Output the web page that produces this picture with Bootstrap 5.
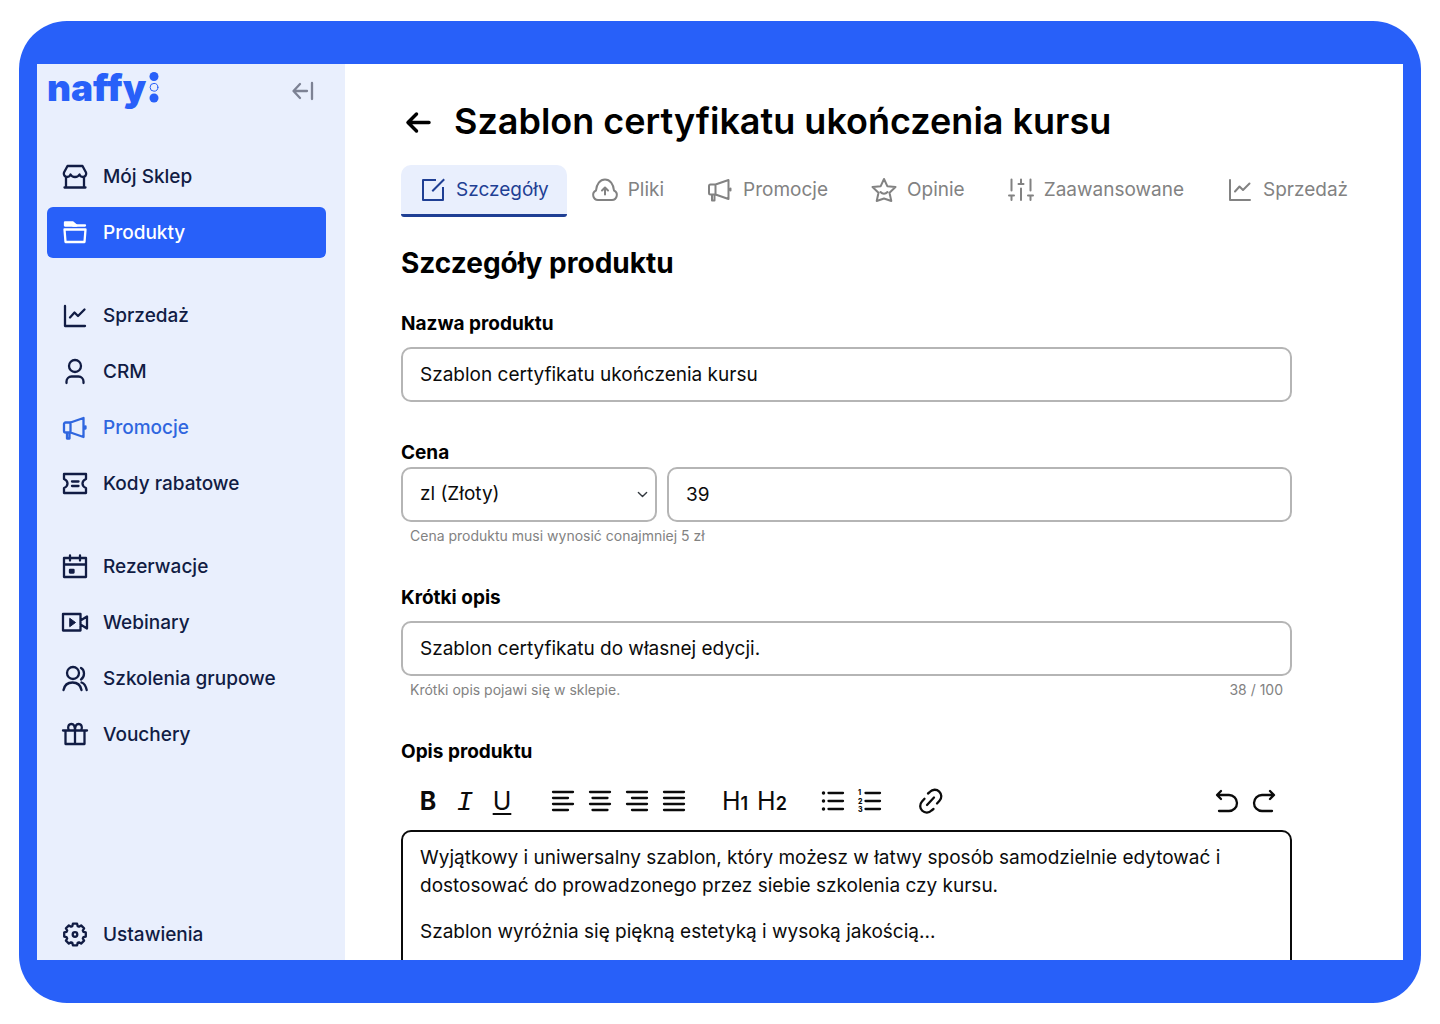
<!DOCTYPE html>
<html lang="pl">
<head>
<meta charset="utf-8">
<meta name="viewport" content="width=device-width, initial-scale=1">
<title>naffy – Szablon certyfikatu ukończenia kursu</title>
<link href="https://cdn.jsdelivr.net/npm/bootstrap@5.3.0/dist/css/bootstrap.min.css" rel="stylesheet">
<style>
:root{--brand:#2860f9;--ink:#111c44;--pale:#e9effd;--tab:#1f3f94;--muted:#828282}
body{font-family:Inter,"Open Sans",sans-serif;color:#0b0b0b;font-size:19px;line-height:28px;height:100vh;padding:21px 19px;background:#fff}
svg{display:block;flex:none;fill:none;stroke:currentColor;stroke-width:2.300;stroke-linecap:round;stroke-linejoin:round}
.frame{background:var(--brand);border-radius:48px;padding:43px 18px;height:100%}
.app{background:#fff;height:100%;overflow:hidden}
.sidebar{width:308px;flex:none;background:var(--pale);padding:0 19px 0 10px}
.brand-row{height:52px;margin-bottom:35px}
.logo{color:var(--brand);font-weight:900;font-size:37px;line-height:44px;height:48px;align-self:flex-start;text-decoration:none}
.collapse-btn{border:0;background:none;padding:0;color:#7d8294;margin-right:10px}
.side-nav{gap:5px}
.side-link{height:51px;padding:0 14px;gap:14px;color:var(--ink);font-weight:500;text-decoration:none;border-radius:6px;white-space:nowrap}
.side-link.active{background:var(--brand);color:#fff}
.side-link.hovered{color:#2f66df}
.group-start{margin-top:27px}
.content{padding:29px 30px 0 56px;min-width:0}
.title-row{height:56px;gap:20px}
.title-row a{color:#000;padding-left:1px}
h1{font-size:36px;font-weight:600;line-height:56px;margin:0;white-space:nowrap;color:#000}
.tabs{margin-top:16px;gap:6px}
.tab-link{height:52px;padding:0 18px;gap:9px;color:var(--muted);text-decoration:none;border-bottom:3px solid transparent;border-radius:10px 10px 3px 3px;white-space:nowrap}
.tab-link svg{stroke-width:2}
.tab-link.active{background:var(--pale);color:var(--tab);border-bottom-color:var(--tab)}
h2{font-size:28px;font-weight:700;line-height:42px;margin:25px 0 26px;color:#000}
.product-form{padding-right:81px}
.field-label{display:block;font-weight:700;color:#000;line-height:28px}
.field-label + .field-box{margin-top:9px}
.form-block + .form-block{margin-top:37px}
.field-box{height:55px;border:2px solid #b5b5b5;border-radius:10px;padding:0 17px;font-size:19px;color:#0b0b0b}
.price-row{gap:10px}
.currency{width:256px;flex:none;background-size:11px;background-position:right 7px center}
.hint{font-size:14px;line-height:22px;color:#828282;margin-top:3px;padding:0 9px}
.toolbar{margin-top:18px;padding:0 11px 0 10px;gap:27px}
.tool-group{gap:3px}
.tool{width:34px;height:34px;border:0;background:none;padding:0;display:flex;align-items:center;justify-content:center;color:#0b0b0b;font-size:25px;line-height:34px}
.tool small{font-size:18px;font-weight:600;line-height:24px}
.tool i{font-family:"Liberation Mono",monospace;font-size:28px;padding-top:3px}
.tool u{text-underline-offset:3px}
.tool b{font-weight:700}
.editor{margin-top:12px;height:300px;border:2px solid #0b0b0b;border-radius:10px;padding:12px 17px;outline:0}
.editor p{margin:0 0 18px}
</style>
<script src="https://cdn.jsdelivr.net/npm/bootstrap@5.3.0/dist/js/bootstrap.bundle.min.js"></script>
</head>
<body>
<svg width="0" height="0" class="position-absolute" aria-hidden="true">
  <symbol id="i-chart" viewBox="0 0 28 28"><path d="M4 4v20h20M9 15.500l4.500-5 3.500 3.500 6.500-6.500"/></symbol>
  <symbol id="i-mega" viewBox="0 0 28 28"><path d="M9.500 8.500H4.500a1.500 1.500 0 0 0-1.500 1.500v7A1.500 1.500 0 0 0 4.500 18.500H9.500zM9.500 8.500l13-4.500v19L9.500 18.500M6 19v5.500h2.500V19M24.500 12.500v2"/></symbol>
</svg>
<div class="frame">
<div class="app d-flex">
  <aside class="sidebar d-flex flex-column">
    <div class="brand-row d-flex align-items-center justify-content-between">
      <a href="#" class="logo d-flex align-items-center">naffy<svg width="16" height="34" viewBox="0 0 16 34"><g stroke="none" fill="currentColor"><circle cx="8" cy="5.500" r="4.500"/><circle cx="8" cy="27" r="4.500"/></g><circle cx="8" cy="16.300" r="3.900" stroke-width="1"/></svg></a>
      <button class="collapse-btn" aria-label="Zwiń menu"><svg width="28" height="28" viewBox="0 0 28 28"><path d="M12 8l-6.500 7 6.500 7M6 15h13M24 7v16"/></svg></button>
    </div>
    <nav class="side-nav d-flex flex-column">
      <a href="#" class="side-link d-flex align-items-center"><svg width="28" height="28" viewBox="0 0 28 28"><path d="M6.500 3h15l3.500 6.500c.8 2-.8 4.500-3 4.500-1.700 0-3-1-3.500-2.500-.8 1.500-2.500 2.500-4.500 2.500s-3.700-1-4.500-2.500c-.5 1.500-1.800 2.500-3.500 2.500-2.200 0-3.800-2.500-3-4.500zM5 14v10M23 14v10M3.500 24.500h21"/></svg>Mój Sklep</a>
      <a href="#" class="side-link active d-flex align-items-center" aria-current="page"><svg width="28" height="28" viewBox="0 0 28 28"><path d="M3.500 10.500h21l-1 12.500h-19zM12 6.500h12"/><path d="M4 3.500h8l3.500 3H4z" fill="currentColor"/></svg>Produkty</a>
      <a href="#" class="side-link group-start d-flex align-items-center"><svg width="28" height="28"><use href="#i-chart"/></svg>Sprzedaż</a>
      <a href="#" class="side-link d-flex align-items-center"><svg width="28" height="28" viewBox="0 0 28 28"><circle cx="14" cy="8" r="6"/><path d="M5.500 25v-1.500a5 5 0 0 1 5-5h7a5 5 0 0 1 5 5V25"/></svg>CRM</a>
      <a href="#" class="side-link hovered d-flex align-items-center"><svg width="28" height="28"><use href="#i-mega"/></svg>Promocje</a>
      <a href="#" class="side-link d-flex align-items-center"><svg width="28" height="28" viewBox="0 0 28 28"><path d="M3 4h22v5c-2.500 1-3.500 2.500-3.500 4.500s1 3.500 3.500 4.500v5H3v-5c2.500-1 3.500-2.500 3.500-4.500S5.500 10 3 9zM11 11.500h6.500M11 16h6.500"/></svg>Kody rabatowe</a>
      <a href="#" class="side-link group-start d-flex align-items-center"><svg width="28" height="28" viewBox="0 0 28 28"><path d="M3 5h22v19H3zM3 11.500h22M9 2.500v5M19 2.500v5"/><path d="M9 17h3.500v2.500H9z" fill="currentColor"/></svg>Rezerwacje</a>
      <a href="#" class="side-link d-flex align-items-center"><svg width="28" height="28" viewBox="0 0 28 28"><path d="M2 5h17.500v16.500H2zM19.500 11.500L26 7.500v12l-6.500-4"/><path d="M9 9.500l5.500 4L9 17.500z" fill="currentColor" stroke-width="1"/></svg>Webinary</a>
      <a href="#" class="side-link d-flex align-items-center"><svg width="28" height="28" viewBox="0 0 28 28"><circle cx="12" cy="8" r="6"/><path d="M2.500 25c1-5 4.500-7.500 9-7.500s8 2.500 9 7.500M20 3c4 2 4 9 0 11.500M20.500 17.500c3 1 4.500 4 5.200 7.500"/></svg>Szkolenia grupowe</a>
      <a href="#" class="side-link d-flex align-items-center"><svg width="28" height="28" viewBox="0 0 28 28"><path d="M2 9.500h24M4.500 9.500V23h19V9.500M14 9.500V23M14 9.500H8C6 6.500 7.500 3 10.500 3S14 5.500 14 9.500c0-4 .5-6.500 3.500-6.500S22 6.500 20 9.500z"/></svg>Vouchery</a>
    </nav>
    <a href="#" class="side-link mt-auto d-flex align-items-center"><svg width="28" height="28" viewBox="0 0 28 28"><circle cx="14" cy="13.500" r="2.300"/><path d="M11.900 2.700h4.200l.6 2.400 1.300.6 2.100-1.300 3 3-1.300 2.100.6 1.300 2.400.6v4.200l-2.400.6-.6 1.300 1.300 2.100-3 3-2.100-1.300-1.300.6-.6 2.400h-4.200l-.6-2.400-1.300-.6-2.100 1.300-3-3 1.300-2.100-.6-1.300-2.400-.6v-4.200l2.400-.6.6-1.300-1.300-2.100 3-3 2.100 1.300 1.300-.6z"/></svg>Ustawienia</a>
  </aside>
  <main class="content flex-fill">
    <div class="title-row d-flex align-items-center">
      <a href="#" aria-label="Wstecz"><svg width="32" height="32" viewBox="0 0 32 32"><path d="M14.500 9l-8.500 8.500 8.500 8.500M6.500 17.500h20.500" stroke-width="3.500"/></svg></a>
      <h1>Szablon certyfikatu ukończenia kursu</h1>
    </div>
    <nav class="tabs d-flex">
      <a href="#" class="tab-link active d-flex align-items-center" aria-current="true"><svg width="28" height="28" viewBox="0 0 28 28"><path d="M16 4H4v20h20V12M14 14.500L24.500 4" stroke-linecap="square"/></svg>Szczegóły</a>
      <a href="#" class="tab-link d-flex align-items-center"><svg width="28" height="28" viewBox="0 0 28 28"><path d="M7 24h14a5 5 0 0 0 2-9.500C22.500 8 19 3.500 14 3.500S5.500 8 5 14.500A5 5 0 0 0 7 24zM14 18.500v-6M11 14.500l3-3 3 3"/></svg>Pliki</a>
      <a href="#" class="tab-link d-flex align-items-center"><svg width="28" height="28"><use href="#i-mega"/></svg>Promocje</a>
      <a href="#" class="tab-link d-flex align-items-center"><svg width="28" height="28" viewBox="0 0 28 28"><path d="M14 3l3.300 7.200 8.200.8-6 5.700 1.800 8.300L14 22.500 6.700 25l1.800-8.300-6-5.700 8.200-.8zM10.500 16c2 2.300 5 2.300 7 0"/></svg>Opinie</a>
      <a href="#" class="tab-link d-flex align-items-center"><svg width="28" height="28" viewBox="0 0 28 28"><path d="M4.500 3.500v11M4.500 24v-4M2 19.500h5M14 3.500v4M11.500 8h5M14 12.500V24M23.500 3.500v11M23.500 24v-4M21 19.500h5"/></svg>Zaawansowane</a>
      <a href="#" class="tab-link d-flex align-items-center"><svg width="28" height="28"><use href="#i-chart"/></svg>Sprzedaż</a>
    </nav>
    <form class="product-form">
      <h2>Szczegóły produktu</h2>
      <div class="form-block">
        <label class="field-label" for="name">Nazwa produktu</label>
        <input id="name" class="form-control field-box" value="Szablon certyfikatu ukończenia kursu">
      </div>
      <div class="form-block">
        <label class="field-label" for="price">Cena</label>
        <div class="price-row d-flex">
          <select class="form-select field-box currency" aria-label="Waluta"><option>zl (Złoty)</option></select>
          <input id="price" class="form-control field-box" value="39">
        </div>
        <div class="hint">Cena produktu musi wynosić conajmniej 5 zł</div>
      </div>
      <div class="form-block">
        <label class="field-label" for="short">Krótki opis</label>
        <input id="short" class="form-control field-box" value="Szablon certyfikatu do własnej edycji.">
        <div class="hint d-flex justify-content-between"><span>Krótki opis pojawi się w sklepie.</span><span>38 / 100</span></div>
      </div>
      <div class="form-block">
        <div id="desc-label" class="field-label">Opis produktu</div>
        <div class="toolbar d-flex">
          <div class="tool-group d-flex">
            <button type="button" class="tool" aria-label="Pogrubienie"><b>B</b></button>
            <button type="button" class="tool" aria-label="Kursywa"><i>I</i></button>
            <button type="button" class="tool" aria-label="Podkreślenie"><u>U</u></button>
          </div>
          <div class="tool-group d-flex">
            <button type="button" class="tool" aria-label="Do lewej"><svg width="28" height="28" viewBox="0 0 28 28"><path d="M4 5h20M4 11h15M4 17h20M4 23h15"/></svg></button>
            <button type="button" class="tool" aria-label="Wyśrodkuj"><svg width="28" height="28" viewBox="0 0 28 28"><path d="M4 5h20M6.500 11h15M4 17h20M6.500 23h15"/></svg></button>
            <button type="button" class="tool" aria-label="Do prawej"><svg width="28" height="28" viewBox="0 0 28 28"><path d="M4 5h20M9 11h15M4 17h20M9 23h15"/></svg></button>
            <button type="button" class="tool" aria-label="Wyjustuj"><svg width="28" height="28" viewBox="0 0 28 28"><path d="M4 5h20M4 11h20M4 17h20M4 23h20"/></svg></button>
          </div>
          <div class="tool-group d-flex">
            <button type="button" class="tool align-items-baseline">H<small>1</small></button>
            <button type="button" class="tool align-items-baseline">H<small>2</small></button>
          </div>
          <div class="tool-group d-flex">
            <button type="button" class="tool" aria-label="Lista punktowana"><svg width="28" height="28" viewBox="0 0 28 28"><path d="M9.500 6H24M9.500 14H24M9.500 22H24"/><path d="M4.500 6h.01M4.500 14h.01M4.500 22h.01" stroke-width="3.500"/></svg></button>
            <button type="button" class="tool" aria-label="Lista numerowana"><svg width="28" height="28" viewBox="0 0 28 28"><path d="M9.500 6H24M9.500 14H24M9.500 22H24"/><g fill="currentColor" stroke="none" font-size="7" font-weight="800"><text x="2" y="8">1</text><text x="2" y="16.500">2</text><text x="2" y="25">3</text></g></svg></button>
          </div>
          <button type="button" class="tool" aria-label="Odnośnik"><svg width="28" height="28" viewBox="0 0 28 28"><path d="M10 18l7-7.500M11 6.500l2-1.700a6.500 6.500 0 0 1 9.500 9l-2.500 2.700M16.500 22l-2 1.500a6.500 6.500 0 0 1-9.500-9l2.500-2.700"/></svg></button>
          <div class="tool-group d-flex ms-auto">
            <button type="button" class="tool" aria-label="Cofnij"><svg width="28" height="28" viewBox="0 0 28 28"><path d="M8 4L4 8l4 4M4.500 8H16a8 8 0 0 1 0 16H6"/></svg></button>
            <button type="button" class="tool" aria-label="Ponów"><svg width="28" height="28" viewBox="0 0 28 28"><path d="M20 4l4 4-4 4M23.500 8H12a8 8 0 0 0 0 16h10"/></svg></button>
          </div>
        </div>
        <div class="editor" contenteditable="true" role="textbox" aria-multiline="true" aria-labelledby="desc-label" spellcheck="false">
          <p>Wyjątkowy i uniwersalny szablon, który możesz w łatwy sposób samodzielnie edytować i dostosować do prowadzonego przez siebie szkolenia czy kursu.</p>
          <p>Szablon wyróżnia się piękną estetyką i wysoką jakością...</p>
        </div>
      </div>
    </form>
  </main>
</div>
</div>
</body>
</html>
